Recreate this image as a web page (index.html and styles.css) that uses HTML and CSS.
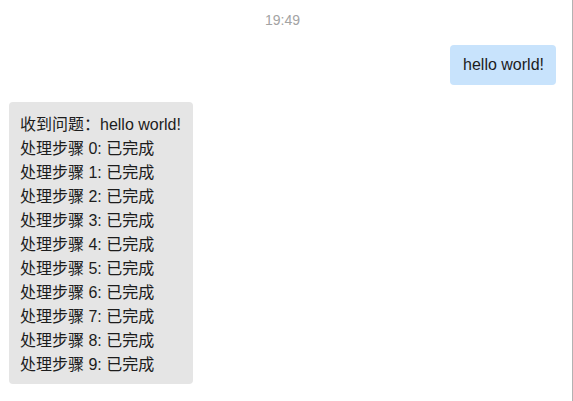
FILE: index.html
```html
<!DOCTYPE html>
<html lang="zh">
<head>
<meta charset="utf-8">
<link rel="stylesheet" href="styles.css">
</head>
<body>
<div class="chat">
  <div class="time">19:49</div>
  <div class="row user"><div class="bubble">hello world!</div></div>
  <div class="row bot">
    <div class="bubble">
      <div>收到问题：hello world!</div>
      <div>处理步骤 0: 已完成</div>
      <div>处理步骤 1: 已完成</div>
      <div>处理步骤 2: 已完成</div>
      <div>处理步骤 3: 已完成</div>
      <div>处理步骤 4: 已完成</div>
      <div>处理步骤 5: 已完成</div>
      <div>处理步骤 6: 已完成</div>
      <div>处理步骤 7: 已完成</div>
      <div>处理步骤 8: 已完成</div>
      <div>处理步骤 9: 已完成</div>
    </div>
  </div>
</div>
</body>
</html>
```
FILE: styles.css
```css
html, body {
  margin: 0;
  padding: 0;
  background: #ffffff;
}
.chat {
  height: 401px;
  box-sizing: border-box;
  border-right: 1px solid #b2b2b2;
  padding: 10px 16px 0 9px;
  display: flex;
  flex-direction: column;
  font-family: "Liberation Sans", "Noto Sans CJK SC", sans-serif;
}
.time {
  text-align: center;
  font-size: 14px;
  line-height: 20px;
  color: #a3a3a3;
  margin-bottom: 15px;
}
.row {
  display: flex;
}
.row.user {
  justify-content: flex-end;
  margin-bottom: 17px;
}
.row.bot {
  justify-content: flex-start;
}
.bubble {
  font-size: 16px;
  line-height: 24px;
  border-radius: 4px;
  color: #1c1c1c;
}
.user .bubble {
  background: #c8e3fc;
  padding: 8px 12px 8px 13px;
}
.bot .bubble {
  background: #e5e5e5;
  padding: 11px 12px 7px 11px;
}
```
